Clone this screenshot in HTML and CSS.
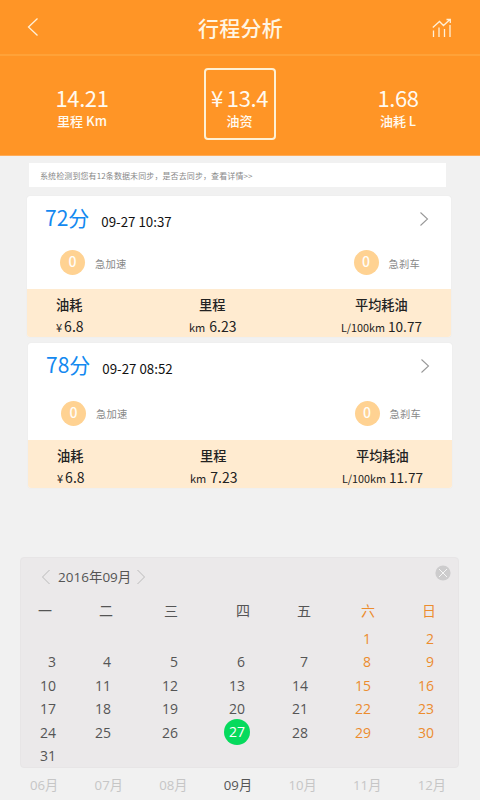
FILE: index.html
```html
<!DOCTYPE html>
<html lang="zh-CN">
<head>
    <meta charset="UTF-8">
    <meta name="viewport" content="width=device-width, initial-scale=1.0">
    <title>行程分析</title>
    <link rel="stylesheet" href="styles.css">
</head>
<body>
<div class="container">
    <header class="header">
        <svg class="back" width="12" height="20" viewBox="0 0 12 20"><path d="M10.5 1.5L1.5 10L10.5 18.5"/></svg>
        <h1>行程分析</h1>
        <svg class="chart" width="20" height="20" viewBox="0 0 20 20">
            <path d="M1.5 19V12.5M7 19V9.5M12.5 19V11M18 19V7"/>
            <path d="M.8 9.5L7.5 3.5L11.5 7.5L18 1.5M14.5 1.5H18.3V5"/>
        </svg>
    </header>
    <div class="summary">
        <div class="total">
            <strong>14.21</strong>
            <span>里程 Km</span>
        </div>
        <div class="total active">
            <strong><i>¥</i>13.4</strong>
            <span>油资</span>
        </div>
        <div class="total">
            <strong>1.68</strong>
            <span>油耗 L</span>
        </div>
    </div>
    <div class="notice">系统检测到您有12条数据未同步，是否去同步，查看详情&gt;&gt;</div>

    <div class="card">
        <div class="card-top">
            <span class="score">72分</span>
            <span class="date">09-27 10:37</span>
            <svg class="arrow" width="10" height="16" viewBox="0 0 10 16"><path d="M1.5 1.5L8.5 8L1.5 14.5"/></svg>
        </div>
        <div class="events">
            <span class="badge">0</span>
            <span class="event">急加速</span>
            <span class="badge brake">0</span>
            <span class="event">急刹车</span>
        </div>
        <div class="stats">
            <div class="stat cost">
                <b>油耗</b>
                <p><small>¥</small>6.8</p>
            </div>
            <div class="stat mileage">
                <b>里程</b>
                <p><small>km</small>6.23</p>
            </div>
            <div class="stat average">
                <b>平均耗油</b>
                <p><small>L/100km</small><em>10.77</em></p>
            </div>
        </div>
    </div>

    <div class="card second">
        <div class="card-top">
            <span class="score">78分</span>
            <span class="date">09-27 08:52</span>
            <svg class="arrow" width="10" height="16" viewBox="0 0 10 16"><path d="M1.5 1.5L8.5 8L1.5 14.5"/></svg>
        </div>
        <div class="events">
            <span class="badge">0</span>
            <span class="event">急加速</span>
            <span class="badge brake">0</span>
            <span class="event">急刹车</span>
        </div>
        <div class="stats">
            <div class="stat cost">
                <b>油耗</b>
                <p><small>¥</small>6.8</p>
            </div>
            <div class="stat mileage">
                <b>里程</b>
                <p><small>km</small>7.23</p>
            </div>
            <div class="stat average">
                <b>平均耗油</b>
                <p><small>L/100km</small><em>11.77</em></p>
            </div>
        </div>
    </div>

    <div class="calendar">
        <div class="calendar-top">
            <svg width="10" height="16" viewBox="0 0 10 16"><path d="M8.5 1L1.5 8L8.5 15"/></svg>
            <span>2016年09月</span>
            <svg width="10" height="16" viewBox="0 0 10 16"><path d="M1.5 1L8.5 8L1.5 15"/></svg>
            <svg class="close" width="16" height="16" viewBox="0 0 16 16"><circle cx="8" cy="8" r="7.6"/><path d="M4 4L12 12M12 4L4 12"/></svg>
        </div>
        <div class="week">
            <span>一</span><span>二</span><span>三</span><span>四</span><span>五</span><span class="weekend">六</span><span class="weekend">日</span>
        </div>
        <div class="days">
            <span></span><span></span><span></span><span></span><span></span><span class="weekend">1</span><span class="weekend">2</span>
            <span>3</span><span>4</span><span>5</span><span>6</span><span>7</span><span class="weekend">8</span><span class="weekend">9</span>
            <span>10</span><span>11</span><span>12</span><span>13</span><span>14</span><span class="weekend">15</span><span class="weekend">16</span>
            <span>17</span><span>18</span><span>19</span><span>20</span><span>21</span><span class="weekend">22</span><span class="weekend">23</span>
            <span>24</span><span>25</span><span>26</span><span class="today">27</span><span>28</span><span class="weekend">29</span><span class="weekend">30</span>
            <span>31</span>
        </div>
    </div>
    <div class="months">
        <span>06月</span><span>07月</span><span>08月</span><span class="current">09月</span><span>10月</span><span>11月</span><span>12月</span>
    </div>
</div>
</body>
</html>
```
FILE: styles.css
```css
*{
    margin:0;
    padding:0;
    box-sizing: border-box;
}
body{
    background-color: #f1f1f1;
    font-family: "Noto Sans CJK SC",sans-serif;
}
svg{
    display: block;
    fill:none;
    flex:none;
}
i,em{
    font-style: normal;
}
.container{
    width:480px;
    height:800px;
    overflow: hidden;
}
/* header */
.header{
    height:56px;
    padding:0 28px 0 27px;
    display: flex;
    align-items: center;
    justify-content: space-between;
    background-color: #ff9526;
    border-bottom:2px solid #ffa238;
}
.header h1{
    font-size:21px;
    font-weight: 500;
    line-height: 54px;
    color:#fff5e3;
    letter-spacing: .3px;
    margin-left:10px;
}
.header svg{
    stroke:#fff0d8;
    stroke-width:1.3;
}
.header .chart{
    margin-top:2px;
}
.summary{
    height:100px;
    padding:12px 46px 0;
    display: flex;
    justify-content: space-between;
    background-color: #ff9526;
    border-bottom:1px solid #ffac58;
}
.total{
    width:72px;
    height:72px;
    padding-top:17px;
    display: flex;
    flex-direction: column;
    align-items: center;
    color:#fffaf0;
    white-space: nowrap;
}
.total.active{
    padding-top:15px;
    border:2px solid #fff0d3;
    border-radius:4px;
    margin-right:1px;
}
.total strong{
    font-size:22px;
    font-weight: 400;
    line-height: 24px;
    letter-spacing: -.4px;
}
.total strong i{
    margin-right:4px;
}
.total span{
    font-size:13px;
    font-weight: 500;
    line-height: 24px;
}
.notice{
    width:417px;
    height:24px;
    margin:7px 0 0 29px;
    padding-left:11px;
    background-color: #fff;
    font-size:8px;
    line-height: 25px;
    letter-spacing: .1px;
    color:#888;
}
/* trips */
.card{
    width:424px;
    height:141px;
    margin:9px 0 0 27px;
    display: flex;
    flex-direction: column;
    background-color: #fff;
    border-radius:3px;
    box-shadow: 0 0 1px #ddd;
    overflow: hidden;
}
.card.second{
    height:145px;
    margin:6px 0 0 28px;
}
.card-top{
    height:45px;
    padding:0 22px 0 18px;
    display: flex;
    align-items: center;
}
.score{
    margin-top:-4px;
    font-size:21px;
    line-height: 42px;
    color:#1389f0;
}
.date{
    margin:7px auto 0 12px;
    font-size:13.3px;
    line-height: 20px;
    color:#111;
}
.arrow{
    stroke:#999;
    stroke-width:1.1;
}
.events{
    height:43px;
    padding:0 31px 0 33px;
    display: flex;
    align-items: center;
}
.second .events{
    height:50px;
}
.badge{
    width:25px;
    height:25px;
    border-radius:50%;
    background-color: #ffd292;
    color:#fffdf8;
    font-size:14px;
    font-weight: 500;
    line-height: 23px;
    text-align: center;
}
.brake{
    margin-left:auto;
}
.event{
    margin:2px 0 0 10px;
    font-size:10.3px;
    line-height: 20px;
    letter-spacing: .2px;
    color:#888;
}
.stats{
    height:48px;
    margin-top:auto;
    padding:6px 29px 0;
    display: grid;
    grid-template-columns: 130px 126px 110px;
    background-color: #ffebd0;
    color:#222;
    white-space: nowrap;
}
.stat b{
    display: block;
    font-size:13.2px;
    font-weight: 500;
    line-height: 20px;
}
.stat p{
    font-size:14px;
    line-height: 22px;
}
.stat small{
    font-size:11px;
    margin-right:2px;
}
.mileage b{
    padding-left:13px;
}
.mileage p{
    padding-left:3px;
}
.mileage small{
    margin-right:4px;
}
.average b{
    padding-left:43px;
}
.average p{
    padding-left:29px;
}
.average small{
    font-size:10.8px;
    margin-right:3px;
}
.average em{
    font-family: "Noto Sans CJK SC",sans-serif;
    font-size:13.6px;
}
/* calendar */
.calendar{
    width:439px;
    height:211px;
    margin:69px 0 0 20px;
    padding-top:8px;
    border:1px solid #e7e5e6;
    border-radius:4px;
    background-color: #ebe9ea;
    font-family: "Open Sans","Noto Sans CJK SC",sans-serif;
    font-size:14px;
    color:#555;
}
.calendar-top{
    height:22px;
    padding:0 7px 0 20px;
    display: flex;
    align-items: center;
}
.calendar-top span{
    margin:-1px 5px 0 7px;
    font-size:13.5px;
    line-height: 20px;
}
.calendar-top svg{
    stroke:#bbb;
}
.calendar-top .close{
    margin:-9px 0 0 auto;
    fill:#cdcccd;
    stroke:#f5f5f5;
}
.close circle{
    stroke:none;
}
.week,.days{
    display: grid;
    text-align: right;
}
.week{
    grid-template-columns: 31px 61px 65px 72px 61px 64px 61px;
    margin-top:11px;
    line-height: 24px;
}
.days{
    grid-template-columns: 35px 55px 67px 67px 63px 63px 63px;
    grid-auto-rows: 23.4px;
    margin-top:4px;
    line-height: 23.4px;
}
.weekend{
    color:#ec8c2e;
}
.today{
    justify-self: end;
    width:26px;
    height:26px;
    margin:-1.3px -5px 0 0;
    border-radius:50%;
    background-color: #06da5d;
    color:#fff;
    line-height: 26px;
    text-align: center;
}
.months{
    padding:5px 34px 0 30px;
    display: flex;
    justify-content: space-between;
    font-family: "Open Sans","Noto Sans CJK SC",sans-serif;
    font-size:13.2px;
    line-height: 24px;
    color:#c6c6c6;
}
.months .current{
    color:#555;
}
```
